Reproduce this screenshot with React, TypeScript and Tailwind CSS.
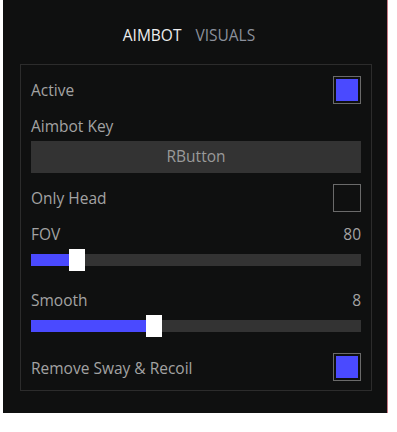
import React from "react";

const font = { fontFamily: '"Open Sans", "Noto Sans", Arial, sans-serif' };

function Check({ on }: { on?: boolean }) {
  return (
    <div className="w-[28px] h-[28px] border border-[#6a6a6a] p-[2px]">
      {on && <div className="w-full h-full bg-[#4a4aff]" />}
    </div>
  );
}

function Slider({ pos }: { pos: number }) {
  return (
    <div className="relative h-[22px] flex items-center">
      <div className="w-full h-[12px] bg-[#333333] flex">
        <div className="h-full bg-[#4a4aff]" style={{ width: pos + 4 }} />
      </div>
      <div
        className="absolute top-0 w-[16px] h-[22px] bg-white"
        style={{ left: pos }}
      />
    </div>
  );
}

export default function App() {
  return (
    <div className="w-[397px] h-[432px] bg-white" style={font}>
      <div className="ml-[3px] w-[385px] h-[413px] bg-[#0f1010] border-r border-[#c97a86] flex flex-col">
        {/* tabs */}
        <div className="h-[64px] flex items-center justify-center gap-[14px] pr-[12px] text-[15.5px] pt-[8px]">
          <span className="text-[#eeeeee]">AIMBOT</span>
          <span className="text-[#8b909c]">VISUALS</span>
        </div>

        {/* group */}
        <div className="ml-[17px] w-[352px] h-[327px] border border-[#2c2c2c] px-[10px] text-[15.5px] text-[#a3a3a3] flex flex-col">
          <div className="mt-[11px] h-[28px] flex items-center justify-between">
            <span className="pt-[2px]">Active</span>
            <Check on />
          </div>
          <div className="mt-[12px] h-[20px] leading-[20px]">Aimbot Key</div>
          <div className="mt-[5px] h-[32px] bg-[#333333] flex items-center justify-center text-[#9a9a9a]">
            RButton
          </div>
          <div className="mt-[11px] h-[28px] flex items-center justify-between">
            <span className="pt-[2px]">Only Head</span>
            <Check />
          </div>
          <div className="mt-[12px] h-[20px] leading-[20px] flex justify-between">
            <span>FOV</span>
            <span>80</span>
          </div>
          <div className="mt-[5px]">
            <Slider pos={38} />
          </div>
          <div className="mt-[19px] h-[20px] leading-[20px] flex justify-between">
            <span>Smooth</span>
            <span>8</span>
          </div>
          <div className="mt-[5px]">
            <Slider pos={115} />
          </div>
          <div className="mt-[16px] h-[28px] flex items-center justify-between">
            <span className="pt-[3px]">Remove Sway &amp; Recoil</span>
            <Check on />
          </div>
        </div>
      </div>
    </div>
  );
}
